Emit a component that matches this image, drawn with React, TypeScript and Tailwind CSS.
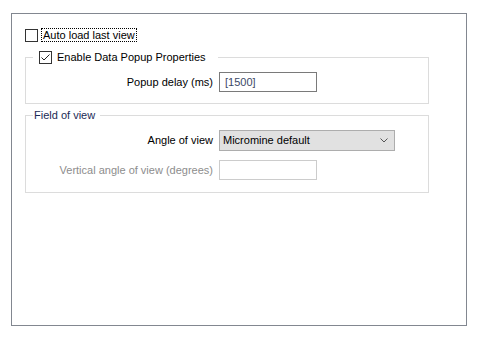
import React from "react";

const font = "font-['Segoe_UI','Liberation_Sans',Arial,sans-serif] text-[11px]";

function Box({ checked }: { checked?: boolean }) {
  return (
    <span className="w-[13px] h-[13px] border border-[#333333] bg-white flex items-center justify-center shrink-0">
      {checked && (
        <svg width="11" height="11" viewBox="0 0 11 11">
          <path d="M1.5 5.5 L4 8 L9.5 2.5" fill="none" stroke="#222" strokeWidth="1" />
        </svg>
      )}
    </span>
  );
}

export default function App() {
  return (
    <div className={`w-[477px] h-[339px] bg-white pt-[13px] pl-[11px] text-black ${font}`}>
      <div className="w-[456px] h-[313px] border border-[#828790] pt-[14px] pl-[13px] pr-[37px]">
        <div className="flex items-center h-[14px]">
          <Box />
          <span className="ml-[3px] border border-dotted border-black px-[1px] leading-[12px]">Auto load last view</span>
        </div>

        <fieldset className="mt-[7px] border border-[#dcdcdc] pb-[11px]">
          <legend className="ml-[7px] pl-[6px] pr-[12px] h-[16px] flex items-center">
            <Box checked />
            <span className="ml-[5px]">Enable Data Popup Properties</span>
          </legend>
          <div className="flex items-center pt-[7px]">
            <div className="w-[187px] text-right">Popup delay (ms)</div>
            <div className="ml-[6px] w-[98px] h-[20px] border border-[#7a7a7a] flex items-center pl-[5px] text-[#3c4866]">[1500]</div>
          </div>
        </fieldset>

        <fieldset className="mt-[3px] border border-[#dcdcdc] pb-[12px]">
          <legend className="ml-[7px] pl-[1px] pr-[5px] h-[16px] flex items-center text-[#1b2a55]">Field of view</legend>
          <div className="flex items-center pt-[7px]">
            <div className="w-[187px] text-right">Angle of view</div>
            <div className="ml-[6px] w-[176px] h-[21px] border border-[#adadad] bg-[#e1e1e1] flex items-center pl-[3px] pr-[6px] justify-between">
              <span>Micromine default</span>
              <svg width="8" height="5" viewBox="0 0 8 5">
                <path d="M0.5 0.5 L4 4 L7.5 0.5" fill="none" stroke="#555" strokeWidth="1" />
              </svg>
            </div>
          </div>
          <div className="flex items-center mt-[9px]">
            <div className="w-[187px] text-right text-[#8d8d8d]">Vertical angle of view (degrees)</div>
            <div className="ml-[6px] w-[98px] h-[20px] border border-[#cccccc] bg-white" />
          </div>
        </fieldset>
      </div>
    </div>
  );
}
